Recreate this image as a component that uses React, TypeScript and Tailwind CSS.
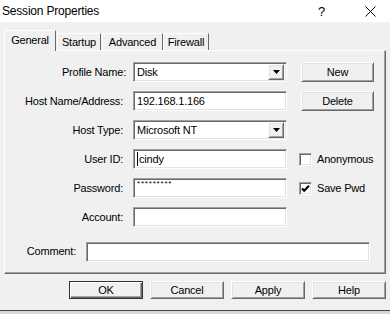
import React from 'react';

const sunken =
  'border border-t-[#a0a0a0] border-l-[#a0a0a0] border-b-white border-r-white bg-white shadow-[inset_1px_1px_0_#696969,inset_-1px_-1px_0_#e3e3e3]';
const raised =
  'border border-t-white border-l-white border-r-[#696969] border-b-[#696969] bg-[#f0f0f0] shadow-[inset_1px_1px_0_#e3e3e3,inset_-1px_-1px_0_#a0a0a0]';

const Label = ({ text, w = 'w-[118px]' }: { text: string; w?: string }) => (
  <div className={`${w} shrink-0 text-right text-black`}>{text}</div>
);

const Dropdown = ({ value }: { value: string }) => (
  <div className={`${sunken} ml-[10px] flex h-[20px] w-[154px] items-center justify-between pl-[3px] pr-[2px]`}>
    <span>{value}</span>
    <div className={`${raised} flex h-[16px] w-[16px] items-center justify-center`}>
      <svg width="7" height="4" viewBox="0 0 7 4">
        <path d="M0 0h7L3.5 4z" fill="#000" />
      </svg>
    </div>
  </div>
);

const Field = ({ children, w = 'w-[154px]' }: { children?: React.ReactNode; w?: string }) => (
  <div className={`${sunken} ml-[10px] flex h-[20px] ${w} items-center pl-[3px]`}>{children}</div>
);

const Checkbox = ({ checked, label }: { checked?: boolean; label: string }) => (
  <div className="ml-[12px] flex items-center gap-[5px]">
    <div className={`${sunken} flex h-[13px] w-[13px] items-center justify-center`}>
      {checked && (
        <svg width="9" height="9" viewBox="0 0 9 9">
          <path d="M1 4.5l2.2 2.3L8 1.8" stroke="#000" strokeWidth="2" fill="none" />
        </svg>
      )}
    </div>
    <span>{label}</span>
  </div>
);

const Button = ({ text, def, w = 'w-[74px]', h = 'h-[18px]' }: { text: string; def?: boolean; w?: string; h?: string }) =>
  def ? (
    <div className={`${w} ${h} flex items-center justify-center border border-[#303030] bg-[#f0f0f0] shadow-[inset_1px_1px_0_#fff,inset_-1px_-1px_0_#696969,inset_-2px_-2px_0_#a0a0a0]`}>
      {text}
    </div>
  ) : (
    <div className={`${raised} ${w} ${h} flex items-center justify-center`}>{text}</div>
  );

const Tab = ({ text, active, w }: { text: string; active?: boolean; w: string }) => (
  <div
    className={`${w} flex items-center justify-center border-t border-l border-t-white border-l-white border-r border-r-[#696969] bg-[#f0f0f0] ${
      active ? 'relative z-10 -mb-px h-[21px] pb-[2px]' : 'h-[17px]'
    }`}
  >
    {text}
  </div>
);

export default function App() {
  return (
    <div className="relative flex h-[314px] w-[390px] flex-col overflow-hidden bg-[#f0f0f0] font-['Liberation_Sans',Arial,sans-serif] text-[11px] leading-none tracking-[-0.2px] text-black">
      {/* title bar */}
      <div className="flex h-[22px] shrink-0 items-center bg-white">
        <span className="pl-[2px] text-[12px] text-black">Session Properties</span>
        <span className="ml-auto mr-[40px] text-[13px]">?</span>
        <svg className="mr-[14px]" width="11" height="11" viewBox="0 0 11 11">
          <path d="M0.5 0.5l10 10M10.5 0.5l-10 10" stroke="#000" strokeWidth="1" />
        </svg>
      </div>

      {/* tabs */}
      <div className="flex items-end pl-[4px] pt-[8px]">
        <Tab text="General" active w="w-[52px]" />
        <div className="ml-[1px]" />
        <Tab text="Startup" w="w-[44px]" />
        <div className="ml-[1px]" />
        <Tab text="Advanced" w="w-[61px]" />
        <Tab text="Firewall" w="w-[46px]" />
      </div>

      {/* panel */}
      <div className="mx-[4px] flex h-[224px] w-[382px] flex-col border border-t-white border-l-white border-r-[#696969] border-b-[#696969] pt-[11px] shadow-[inset_-1px_-1px_0_#a0a0a0]">
        <div className="flex flex-col gap-[9px]">
          <div className="flex h-[20px] items-center">
            <Label text="Profile Name:" w="w-[121px]" />
            <div className="-ml-[3px]" />
            <Dropdown value="Disk" />
            <div className="ml-[14px]">
              <Button text="New" w="w-[73px]" h="h-[20px]" />
            </div>
          </div>
          <div className="flex h-[20px] items-center">
            <Label text="Host Name/Address:" />
            <Field>192.168.1.166</Field>
            <div className="ml-[14px]">
              <Button text="Delete" w="w-[73px]" h="h-[20px]" />
            </div>
          </div>
          <div className="flex h-[20px] items-center">
            <Label text="Host Type:" />
            <Dropdown value="Microsoft NT" />
          </div>
          <div className="flex h-[20px] items-center">
            <Label text="User ID:" />
            <Field>
              <span className="mr-[1px] h-[14px] w-px bg-black" />
              cindy
            </Field>
            <Checkbox label="Anonymous" />
          </div>
          <div className="flex h-[20px] items-center">
            <Label text="Password:" />
            <Field>
              <span className="-mt-[8px] text-[8px] tracking-[0.8px]">*********</span>
            </Field>
            <Checkbox checked label="Save Pwd" />
          </div>
          <div className="flex h-[20px] items-center">
            <Label text="Account:" />
            <Field />
          </div>
        </div>
        <div className="mt-[15px] flex h-[19px] items-center">
          <Label text="Comment:" w="w-[71px]" />
          <Field w="w-[284px] h-[19px]" />
        </div>
      </div>

      {/* buttons */}
      <div className="mt-[7px] flex gap-[7px] pl-[69px]">
        <Button text="OK" def />
        <Button text="Cancel" />
        <Button text="Apply" />
        <Button text="Help" />
      </div>

      <div className="mt-auto h-[4px] border-t border-t-[#404040] bg-[#d8d8d8]" />
    </div>
  );
}
